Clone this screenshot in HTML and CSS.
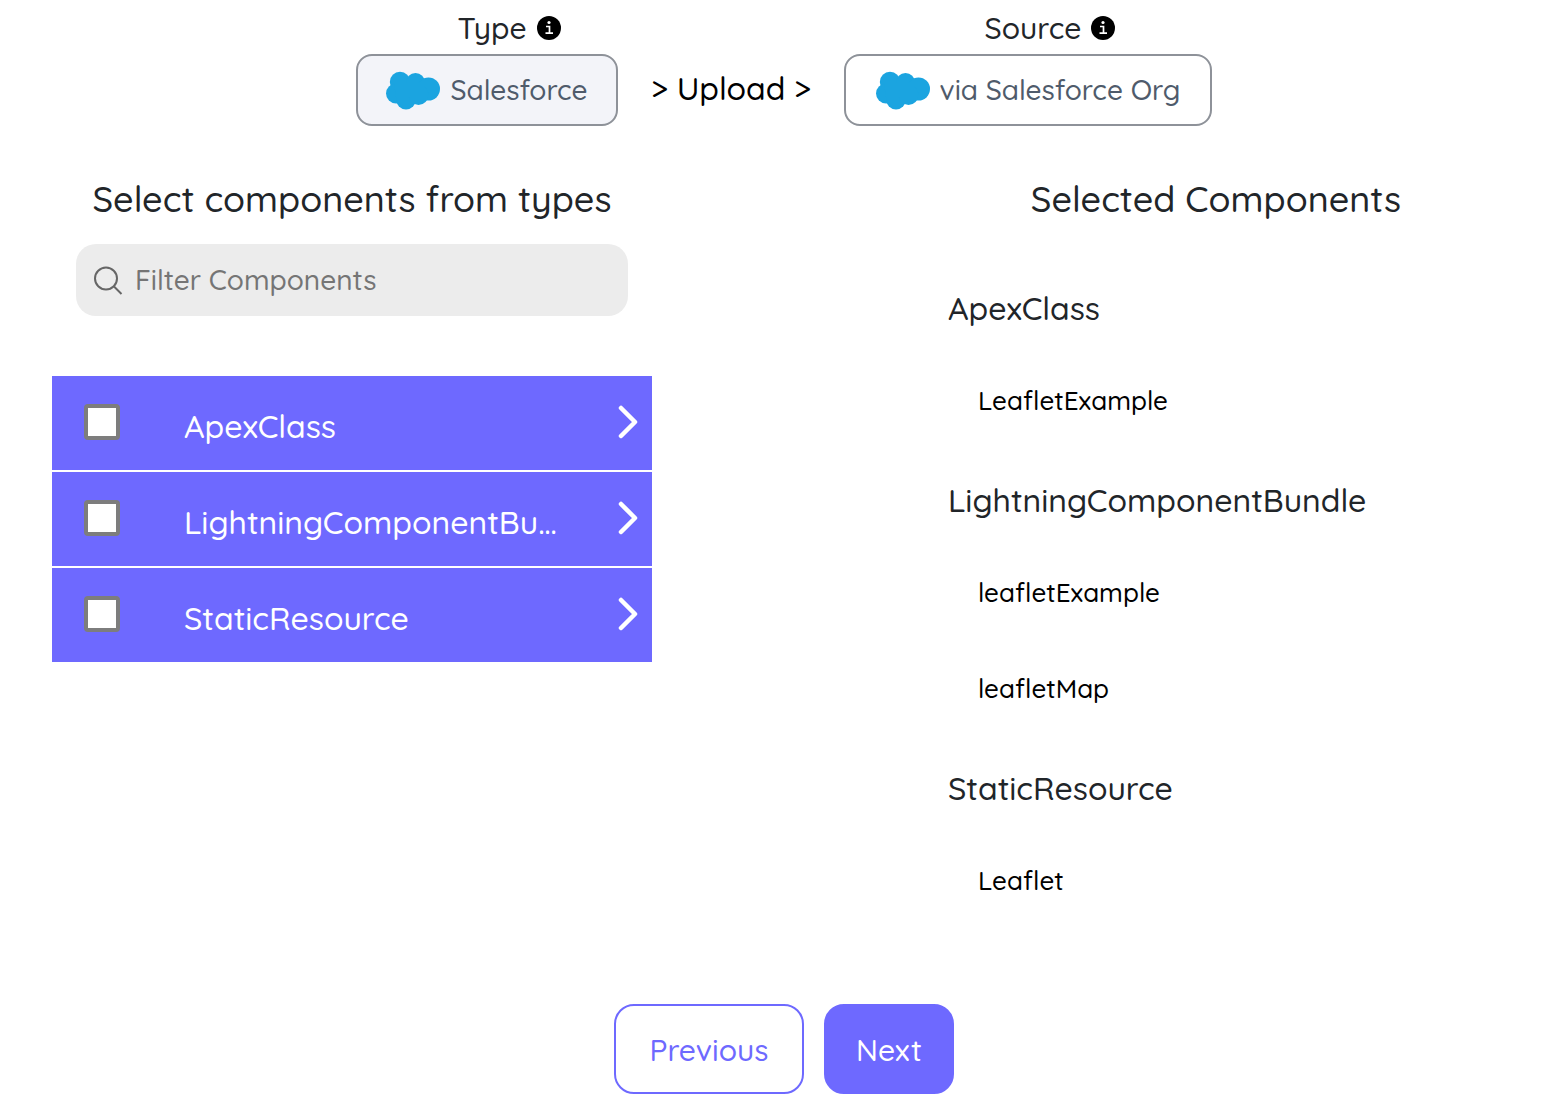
FILE: index.html
```
<!DOCTYPE html>
<html lang="en">

<head>
    <meta charset="UTF-8">
    <meta name="viewport" content="width=device-width, initial-scale=1.0">
    <title>Select components</title>
    <link rel="stylesheet" href="styles.css">
</head>

<body>
    <svg class="sprite" aria-hidden="true">
        <symbol id="cloud" viewBox="0 0 54 40">
            <g fill="#1ba4e0">
                <circle cx="14" cy="12" r="10.200" />
                <circle cx="29.500" cy="12.500" r="9.500" />
                <circle cx="42.500" cy="19" r="11.500" />
                <circle cx="10" cy="23.500" r="10" />
                <circle cx="20" cy="29.500" r="10" />
                <circle cx="32.500" cy="25" r="10" />
                <path d="M8 13h30v14H10z" />
            </g>
        </symbol>
        <symbol id="info" viewBox="0 0 24 24">
            <circle cx="12" cy="12" r="12" />
            <circle cx="12" cy="6.500" r="1.600" fill="#fff" />
            <path d="M9 10.500h3.500v7M8.500 17.200h7.500" fill="none" stroke="#fff" stroke-width="1.700" />
        </symbol>
        <symbol id="chevron" viewBox="0 0 20 34">
            <path d="M3 3l14 14L3 31" fill="none" stroke="#fff" stroke-width="4.500" stroke-linecap="round" stroke-linejoin="round" />
        </symbol>
    </svg>

    <header class="steps">
        <div class="step">
            <div class="step-label">Type <svg class="info"><use href="#info" /></svg></div>
            <button class="step-btn active"><svg class="cloud"><use href="#cloud" /></svg>Salesforce</button>
        </div>
        <div class="step-action">&gt; Upload &gt;</div>
        <div class="step">
            <div class="step-label">Source <svg class="info"><use href="#info" /></svg></div>
            <button class="step-btn source"><svg class="cloud"><use href="#cloud" /></svg>via Salesforce Org</button>
        </div>
    </header>

    <main class="columns">
        <section class="column">
            <h2>Select components from types</h2>
            <label class="search">
                <svg class="search-icon" viewBox="0 0 30 30"><circle cx="13" cy="13.500" r="11" /><path d="M21 21.500l7.500 7.500" /></svg>
                <input type="text" placeholder="Filter Components" aria-label="Filter Components">
            </label>
            <ul class="types">
                <li>
                    <input type="checkbox" id="apex">
                    <label for="apex">ApexClass</label>
                    <svg class="chevron"><use href="#chevron" /></svg>
                </li>
                <li>
                    <input type="checkbox" id="lwc">
                    <label for="lwc">LightningComponentBundle</label>
                    <svg class="chevron"><use href="#chevron" /></svg>
                </li>
                <li>
                    <input type="checkbox" id="static">
                    <label for="static">StaticResource</label>
                    <svg class="chevron"><use href="#chevron" /></svg>
                </li>
            </ul>
        </section>

        <section class="column">
            <h2>Selected Components</h2>
            <div class="selected">
                <h3>ApexClass</h3>
                <ul>
                    <li>LeafletExample</li>
                </ul>
                <h3>LightningComponentBundle</h3>
                <ul>
                    <li>leafletExample</li>
                    <li>leafletMap</li>
                </ul>
                <h3>StaticResource</h3>
                <ul>
                    <li>Leaflet</li>
                </ul>
            </div>
        </section>
    </main>

    <footer class="nav">
        <button class="nav-btn">Previous</button>
        <button class="nav-btn next">Next</button>
    </footer>
</body>

</html>
```
FILE: styles.css
```
* {
    box-sizing: border-box;
    margin: 0;
    padding: 0;
}

body {
    font-family: Quicksand, Inter, sans-serif;
    font-weight: 500;
    color: #212529;
    background: #fff;
}

button, input {
    font: inherit;
}

ul {
    list-style: none;
}

.sprite {
    position: absolute;
    width: 0;
    height: 0;
}

/* top steps */
.steps {
    display: flex;
    justify-content: center;
    align-items: flex-end;
    padding: 2px 0 0 2px;
}

.step-label {
    display: flex;
    justify-content: center;
    align-items: center;
    gap: 10px;
    height: 52px;
    padding-left: 44px;
    font-size: 30px;
}

.info {
    width: 24px;
    height: 24px;
}

.step-btn {
    display: flex;
    justify-content: center;
    align-items: center;
    gap: 10px;
    min-width: 262px;
    height: 72px;
    padding-bottom: 1px;
    border: 2px solid #8e9299;
    border-radius: 16px;
    background: #fff;
    color: #4f5b6b;
    font-size: 28px;
}

.step-btn.active {
    background: #f3f4f9;
}

.step-btn.source {
    min-width: 368px;
}

.cloud {
    width: 54px;
    height: 40px;
}

.step-action {
    width: 226px;
    padding-bottom: 4px;
    line-height: 68px;
    text-align: center;
    font-size: 32px;
    color: #000;
}

/* two columns */
.columns {
    display: flex;
    justify-content: space-between;
    gap: 40px;
    padding: 50px 50px 0 52px;
}

.column {
    flex: 1;
    min-width: 0;
    max-width: 600px;
}

h2 {
    line-height: 46px;
    text-align: center;
    font-size: 36px;
    font-weight: 500;
}

.search {
    display: flex;
    align-items: center;
    gap: 12px;
    height: 72px;
    margin: 22px 24px 60px;
    padding: 0 17px;
    border-radius: 20px;
    background: #ececec;
}

.search-icon {
    width: 30px;
    height: 30px;
    fill: none;
    stroke: #666;
    stroke-width: 2;
}

.search input {
    flex: 1;
    min-width: 0;
    padding-bottom: 2px;
    border: none;
    outline: none;
    background: transparent;
    font-size: 28px;
}

.search input::placeholder {
    color: #757575;
}

.types li {
    display: flex;
    align-items: center;
    height: 94px;
    padding: 0 14px 2px 32px;
    background: #6e69ff;
    color: #fff;
}

.types li + li {
    margin-top: 2px;
}

.types input {
    appearance: none;
    flex: none;
    width: 36px;
    height: 36px;
    margin-right: 64px;
    border: 4px solid #7d7d7d;
    border-radius: 4px;
    background: #fff;
}

.types label {
    width: 378px;
    padding-top: 8px;
    line-height: 40px;
    font-size: 32px;
    overflow: hidden;
    white-space: nowrap;
    text-overflow: ellipsis;
}

.chevron {
    flex: none;
    width: 20px;
    height: 34px;
    margin-left: auto;
}

.selected {
    padding: 38px 32px 0;
}

.selected h3 {
    line-height: 96px;
    font-size: 32px;
    font-weight: 500;
}

.selected li {
    height: 96px;
    padding-left: 30px;
    line-height: 90px;
    font-size: 26px;
    color: #000;
}

/* bottom buttons */
.nav {
    display: flex;
    justify-content: center;
    gap: 20px;
    padding: 72px 0 14px 2px;
}

.nav-btn {
    height: 90px;
    min-width: 190px;
    padding-top: 2px;
    border: 2px solid #6e69ff;
    border-radius: 20px;
    background: #fff;
    color: #6e69ff;
    font-size: 30px;
}

.nav-btn.next {
    min-width: 130px;
    background: #6e69ff;
    color: #fff;
}
```
